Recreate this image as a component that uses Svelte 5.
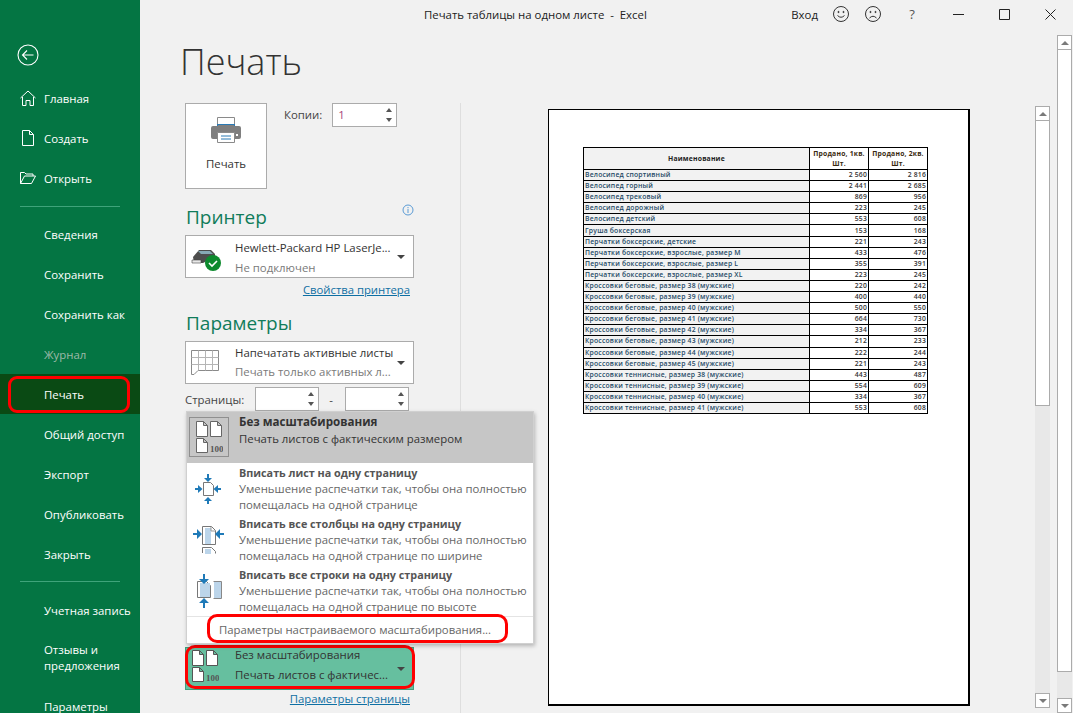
<script>
  const sideTop = [
    { label: 'Главная', icon: 'home' },
    { label: 'Создать', icon: 'new' },
    { label: 'Открыть', icon: 'open' }
  ];
  const sideMid = ['Сведения', 'Сохранить', 'Сохранить как', 'Журнал', 'Печать', 'Общий доступ', 'Экспорт', 'Опубликовать', 'Закрыть'];
  const rows = [
    ['Велосипед спортивный', '2 560', '2 816'],
    ['Велосипед горный', '2 441', '2 685'],
    ['Велосипед трековый', '869', '956'],
    ['Велосипед дорожный', '223', '245'],
    ['Велосипед детский', '553', '608'],
    ['Груша боксерская', '153', '168'],
    ['Перчатки боксерские, детские', '221', '243'],
    ['Перчатки боксерские, взрослые, размер M', '433', '476'],
    ['Перчатки боксерские, взрослые, размер L', '355', '391'],
    ['Перчатки боксерские, взрослые, размер XL', '223', '245'],
    ['Кроссовки беговые, размер 38 (мужские)', '220', '242'],
    ['Кроссовки беговые, размер 39 (мужские)', '400', '440'],
    ['Кроссовки беговые, размер 40 (мужские)', '500', '550'],
    ['Кроссовки беговые, размер 41 (мужские)', '664', '730'],
    ['Кроссовки беговые, размер 42 (мужские)', '334', '367'],
    ['Кроссовки беговые, размер 43 (мужские)', '212', '233'],
    ['Кроссовки беговые, размер 44 (мужские)', '222', '244'],
    ['Кроссовки беговые, размер 45 (мужские)', '221', '243'],
    ['Кроссовки теннисные, размер 38 (мужские)', '443', '487'],
    ['Кроссовки теннисные, размер 39 (мужские)', '554', '609'],
    ['Кроссовки теннисные, размер 40 (мужские)', '334', '367'],
    ['Кроссовки теннисные, размер 41 (мужские)', '553', '608']
  ];
  const scaling = [
    { title: 'Вписать лист на одну страницу', l1: 'Уменьшение распечатки так, чтобы она полностью', l2: 'помещалась на одной странице', icon: 'sheet' },
    { title: 'Вписать все столбцы на одну страницу', l1: 'Уменьшение распечатки так, чтобы она полностью', l2: 'помещалась на одной странице по ширине', icon: 'cols' },
    { title: 'Вписать все строки на одну страницу', l1: 'Уменьшение распечатки так, чтобы она полностью', l2: 'помещалась на одной странице по высоте', icon: 'rows' }
  ];
</script>

{#snippet pages(stroke)}
  <svg class="pages" width="27" height="34" viewBox="0 0 27 34">
    <g fill="#fff" stroke={stroke}>
      <path d="M.5 1.500h7l4 4v11H.5zM7.500 1.500v4h4" />
      <path d="M14.500 1.500h7l4 4v11h-11zM21.500 1.500v4h4" />
      <path d="M.5 18.500h7l4 4v10H.5zM7.500 18.500v4h4" />
    </g>
    <text x="14" y="32" class="hundred">100</text>
  </svg>
{/snippet}

{#snippet spin()}
  <span class="spin">
    <i class="up"></i>
    <i class="down"></i>
  </span>
{/snippet}

<div class="window">
  <aside class="side">
    <div class="back">
      <svg width="22" height="22" viewBox="0 0 22 22" fill="none" stroke="#fff" stroke-width="1.1">
        <circle cx="11" cy="11" r="10" />
        <path d="M5.500 11h11M10 6.500 5.500 11l4.500 4.500" />
      </svg>
    </div>
    {#each sideTop as item}
      <div class="side-item">
        <span class="side-icon">
          {#if item.icon === 'home'}
            <svg width="16" height="16" viewBox="0 0 16 16" fill="none" stroke="#fff" stroke-width="1"><path d="M.5 8 8 1l7.500 7M2.500 7v8.500H6V10.500h4v5h3.500V7" /></svg>
          {:else if item.icon === 'new'}
            <svg width="16" height="16" viewBox="0 0 16 16" fill="none" stroke="#fff" stroke-width="1"><path d="M2.500.5h7l4 4v11h-11zM9.500.5v4h4" /></svg>
          {:else}
            <svg width="16" height="16" viewBox="0 0 16 16" fill="none" stroke="#fff" stroke-width="1"><path d="M.5 13.500V2.500h4l1.500 1.500h7v2M.5 13.500h11l4-7.500H4.500z" /></svg>
          {/if}
        </span>
        {item.label}
      </div>
    {/each}
    <div class="side-sep first"></div>
    {#each sideMid as label}
      <div class="side-item" class:off={label === 'Журнал'} class:on={label === 'Печать'}>
        <span class="side-icon"></span>{label}
        {#if label === 'Печать'}<span class="mark mark-side"></span>{/if}
      </div>
    {/each}
    <div class="side-sep second"></div>
    <div class="side-item"><span class="side-icon"></span>Учетная запись</div>
    <div class="side-item two"><span class="side-icon"></span><span>Отзывы и<br />предложения</span></div>
    <div class="side-item"><span class="side-icon"></span>Параметры</div>
  </aside>

  <main class="main">
    <header class="titlebar">
      <div class="doc-title">Печать таблицы на одном листе&nbsp; -&nbsp; Excel</div>
      <div class="win-tools">
        <span class="login">Вход</span>
        <svg class="tool" width="18" height="18" viewBox="0 0 18 18" fill="none" stroke="#333"><circle cx="9" cy="9" r="7.500" /><circle cx="6.500" cy="7" r=".6" fill="#333" /><circle cx="11.500" cy="7" r=".6" fill="#333" /><path d="M5.500 10.500q3.500 3.500 7 0" /></svg>
        <svg class="tool" width="18" height="18" viewBox="0 0 18 18" fill="none" stroke="#333"><circle cx="9" cy="9" r="7.500" /><circle cx="6.500" cy="7" r=".6" fill="#333" /><circle cx="11.500" cy="7" r=".6" fill="#333" /><path d="M5.500 13q3.500-3.500 7 0" /></svg>
        <span class="help">?</span>
        <span class="ctl"><svg width="11" height="11" viewBox="0 0 11 11" stroke="#222"><path d="M0 5.500h11" /></svg></span>
        <span class="ctl"><svg width="11" height="11" viewBox="0 0 11 11" fill="none" stroke="#222"><path d="M.5.500h10v10H.5z" /></svg></span>
        <span class="ctl"><svg width="11" height="11" viewBox="0 0 11 11" fill="none" stroke="#222"><path d="M.5.500l10 10M10.500.500l-10 10" /></svg></span>
      </div>
    </header>

    <div class="content">
      <div class="col-left">
        <h1>Печать</h1>

        <div class="print-row">
          <div class="print-btn">
            <svg width="30" height="26" viewBox="0 0 30 26">
              <path d="M6.500.5h17v10h-17z" fill="#fff" stroke="#8a8a8a" />
              <path d="M6 7h18v4H6z" fill="#2a7ab5" />
              <path d="M2 9h5v-1h16v1h5a2 2 0 0 1 2 2v9a2 2 0 0 1-2 2H2a2 2 0 0 1-2-2v-9a2 2 0 0 1 2-2z" fill="#7f7f7f" />
              <path d="M6.500 15.500h17v10h-17z" fill="#fff" stroke="#8a8a8a" />
              <path d="M10 19h10M10 22h10" stroke="#2a7ab5" />
              <path d="M25 17h2v2h-2z" fill="#fff" />
            </svg>
            <span>Печать</span>
          </div>
          <div class="copies">
            <span>Копии:</span>
            <div class="num copies-num"><b>1</b>{@render spin()}</div>
          </div>
        </div>

        <div class="head-row">
          <h2>Принтер</h2>
          <svg class="info" width="12" height="12" viewBox="0 0 12 12" fill="none" stroke="#5a9bd5"><circle cx="6" cy="6" r="5" /><path d="M6 5v4M6 3v1.200" /></svg>
        </div>
        <div class="drop">
          <span class="drop-icon">
            <svg width="32" height="28" viewBox="0 0 32 28">
              <g transform="translate(0 4)">
                <path d="M2 10 8 3h12l4 4v3l-12 6H3z" fill="#4d4d4d" />
                <path d="M7 4h12l3 3H10z" fill="#86a9b5" />
                <path d="M1 13h9v3H1z" fill="#e8e8e8" stroke="#444" stroke-width=".6" />
              </g>
              <circle cx="22" cy="20" r="8" fill="#0d8a2e" />
              <path d="M18 20l3 3 5-5" fill="none" stroke="#fff" stroke-width="1.600" />
            </svg>
          </span>
          <span class="drop-text"><span class="t1">Hewlett-Packard HP LaserJe...</span><span class="t2">Не подключен</span></span>
          <i class="caret"></i>
        </div>
        <div class="link-row"><span class="link">Свойства принтера</span></div>

        <h2 class="params">Параметры</h2>
        <div class="drop sheets">
          <span class="drop-icon">
            <svg width="30" height="28" viewBox="0 0 30 28" fill="none" stroke="#8a8a8a">
              <path d="M.5 1.500h27v20H7l-4 4H.5z" />
              <path d="M.5 8.500h27M.5 15.500h27M7.500 1.500v20M14.500 1.500v20M21.500 1.500v20" stroke="#b5b5b5" />
            </svg>
          </span>
          <span class="drop-text"><span class="t1">Напечатать активные листы</span><span class="t2">Печать только активных л...</span></span>
          <i class="caret"></i>
        </div>
        <div class="pages-row">
          <span>Страницы:</span>
          <div class="num pg">{@render spin()}</div>
          <span class="dash">-</span>
          <div class="num pg">{@render spin()}</div>
        </div>

        <div class="spacer"></div>

        <div class="drop green">
          <span class="drop-icon tight">{@render pages('#555')}</span>
          <span class="drop-text"><span class="t1">Без масштабирования</span><span class="t2">Печать листов с фактичес...</span></span>
          <i class="caret"></i>
          <span class="mark mark-green"></span>
        </div>
        <div class="link-row last"><span class="link">Параметры страницы</span></div>
      </div>

      <div class="col-right">
        <div class="page">
          <table>
            <thead>
              <tr>
                <th class="name-h">Наименование</th>
                <th class="q">Продано, 1кв.<br />Шт.</th>
                <th class="q">Продано, 2кв.<br />Шт.</th>
              </tr>
            </thead>
            <tbody>
              {#each rows as r}
                <tr><td class="name">{r[0]}</td><td class="v">{r[1]}</td><td class="v">{r[2]}</td></tr>
              {/each}
            </tbody>
          </table>
        </div>
        <div class="scroll inner">
          <span class="sb-btn"><i class="up"></i></span>
          <span class="thumb"></span>
          <span class="track"></span>
          <span class="sb-btn"><i class="down"></i></span>
        </div>
      </div>

      <div class="scroll outer">
        <span class="sb-btn"><i class="up"></i></span>
        <span class="thumb"></span>
        <span class="track"></span>
        <span class="sb-btn"><i class="down"></i></span>
      </div>
    </div>
  </main>

  <div class="menu">
    <div class="menu-item selected">
      <span class="menu-icon boxed">{@render pages('#666')}</span>
      <span class="menu-text">
        <b>Без масштабирования</b>
        <span>Печать листов с фактическим размером</span>
      </span>
    </div>
    {#each scaling as s}
      <div class="menu-item">
        <span class="menu-icon">
          {#if s.icon === 'sheet'}
            <svg width="38" height="36" viewBox="0 0 38 36">
              <path d="M14.500 11.500h7l3 3v10h-10z" fill="#fff" stroke="#777" />
              <path d="M6 18h4M19 3v5M32 18h-4M19 33v-4" stroke="#1f7ab8" stroke-width="2" />
              <path d="M9 14l4.500 4L9 22zM29 14l-4.500 4 4.500 4zM15 7l4 4 4-4zM15 30l4-4 4 4z" fill="#1f7ab8" />
            </svg>
          {:else if s.icon === 'cols'}
            <svg width="38" height="36" viewBox="0 0 38 36">
              <path d="M13.500 4.500h9l4 4v14h-13z" fill="#fff" stroke="#777" />
              <path d="M16 6h6v16h-6z" fill="#bcd5ea" />
              <path d="M22 5v4h4" fill="#fff" stroke="#999" />
              <path d="M13.500 31v-5.500h9l4 4v2" fill="#fff" stroke="#777" />
              <path d="M16 27h6v5h-6z" fill="#bcd5ea" />
              <path d="M4 12h5M35 12h-5" stroke="#1f7ab8" stroke-width="2" />
              <path d="M8 7l5 5-5 5zM31 7l-5 5 5 5z" fill="#1f7ab8" />
            </svg>
          {:else}
            <svg width="38" height="36" viewBox="0 0 38 36">
              <path d="M8.500 8.500h9l4 4v12h-13z" fill="#fff" stroke="#777" />
              <path d="M11 10h10v14H11z" fill="#bcd5ea" />
              <path d="M24.500 8.500h8v17h-8" fill="#fff" stroke="#888" />
              <path d="M25 9h7v16h-7z" fill="#bcd5ea" />
              <path d="M15 1v6M15 35v-6" stroke="#1f7ab8" stroke-width="2" />
              <path d="M10 6l5 5 5-5zM10 30l5-5 5 5z" fill="#1f7ab8" />
            </svg>
          {/if}
        </span>
        <span class="menu-text">
          <b>{s.title}</b>
          <span>{s.l1}</span>
          <span>{s.l2}</span>
        </span>
      </div>
    {/each}
    <div class="menu-foot">Параметры настраиваемого масштабирования...<span class="mark mark-foot"></span></div>
  </div>
</div>

<style>
  :global(body) { margin: 0; background: #f1f1f1; }
  .window {
    position: relative;
    display: flex;
    width: 1073px;
    height: 713px;
    overflow: hidden;
    font-family: "Open Sans", "Noto Sans", sans-serif;
    font-size: 11.400px;
    color: #444;
  }
  .side {
    flex: 0 0 140px;
    background: #047543;
    color: #fff;
    display: flex;
    flex-direction: column;
    padding-top: 44px;
    box-sizing: border-box;
  }
  .back { flex: 0 0 34px; padding-left: 17px; }
  .side-item {
    position: relative;
    flex: 0 0 40px;
    display: flex;
    align-items: center;
    color: #fff;
  }
  .side-item.two { flex: 0 0 56px; line-height: 16px; }
  .side-item.off { color: #9db9a8; }
  .side-item.on { background: #0a4a14; }
  .side-icon { flex: 0 0 44px; display: flex; justify-content: flex-start; padding-left: 20px; box-sizing: border-box; }
  .side-sep { flex: 0 0 1px; margin: 7px 20px; background: #3fa37a; }
  .side-sep.first { margin-top: 8px; }
  .side-sep.second { margin-bottom: 8px; }

  .mark { position: absolute; border: 3px solid #f00; box-sizing: border-box; pointer-events: none; }
  .mark-side { left: 8px; top: 2px; width: 122px; height: 37px; border-radius: 9px; }
  .mark-green { left: -1px; top: -3px; width: 230px; height: 44px; border-radius: 10px; }
  .mark-foot { left: 20px; top: -3px; width: 301px; height: 29px; border-radius: 10px; }

  .main { flex: 1; display: flex; flex-direction: column; min-width: 0; }
  .titlebar { position: relative; flex: 0 0 30px; display: flex; justify-content: flex-end; align-items: flex-start; }
  .doc-title {
    position: absolute;
    left: 284px;
    top: 7px;
    color: #222;
    white-space: nowrap;
  }
  .win-tools { display: flex; align-items: center; color: #222; height: 28px; }
  .login { margin-right: 14px; }
  .tool { margin-right: 14px; }
  .help { width: 20px; margin: 0 13px 0 6px; color: #555; font-size: 13px; text-align: center; }
  .ctl { width: 46px; display: flex; justify-content: center; }

  .content { position: relative; flex: 1; display: flex; min-height: 0; }
  .col-left {
    position: relative;
    flex: 0 0 320px;
    box-sizing: border-box;
    padding: 0 46px 0 45px;
    display: flex;
    flex-direction: column;
  }
  .col-left::after {
    content: "";
    position: absolute;
    right: -1px;
    top: 73px;
    bottom: 0;
    width: 1px;
    background: #dedede;
  }
  h1 {
    margin: 7px 0 0 -5px;
    height: 66px;
    flex: 0 0 auto;
    font-weight: 300;
    font-size: 36px;
    line-height: 50px;
    color: #333;
  }
  .print-row { display: flex; flex: 0 0 86px; }
  .print-btn {
    width: 82px;
    height: 86px;
    box-sizing: border-box;
    background: #fff;
    border: 1px solid #ababab;
    display: flex;
    flex-direction: column;
    align-items: center;
    padding-top: 13px;
    gap: 13px;
    color: #333;
  }
  .copies { display: flex; margin-left: 17px; gap: 10px; align-items: flex-start; color: #444; }
  .copies > span { line-height: 24px; }
  .num {
    position: relative;
    box-sizing: border-box;
    height: 24px;
    background: #fff;
    border: 1px solid #ababab;
  }
  .copies-num { width: 65px; padding: 0 5px; line-height: 22px; }
  .copies-num b { font-weight: 400; color: #a8457a; }
  .spin {
    position: absolute;
    right: 4px;
    top: 4px;
    bottom: 4px;
    display: flex;
    flex-direction: column;
    justify-content: space-between;
  }
  .up, .down { display: block; width: 0; height: 0; border-left: 3.500px solid transparent; border-right: 3.500px solid transparent; }
  .up { border-bottom: 4px solid #555; }
  .down { border-top: 4px solid #555; }

  .head-row { display: flex; justify-content: space-between; align-items: flex-start; margin-top: 13px; flex: 0 0 33px; }
  h2 {
    margin: -1px 0 0;
    font-weight: 400;
    font-size: 19px;
    line-height: 32px;
    color: #107c5a;
    padding-left: 1px;
  }
  .info { margin-top: 2px; }
  h2.params { margin-top: 4px; flex: 0 0 34px; box-sizing: border-box; }
  .drop {
    position: relative;
    box-sizing: border-box;
    height: 43px;
    width: 229px;
    background: #fff;
    border: 1px solid #ababab;
    display: flex;
    align-items: center;
    flex: 0 0 auto;
  }
  .drop-icon { flex: 0 0 49px; padding-left: 5px; box-sizing: border-box; display: flex; }
  .drop-icon.tight { padding-left: 6px; align-self: flex-start; padding-top: 1px; }
  .drop-text { flex: 1; display: flex; flex-direction: column; line-height: 20px; white-space: nowrap; overflow: hidden; padding-top: 2px; }
  .t1 { color: #333; }
  .t2 { color: #7a7a7a; }
  .sheets .drop-text { padding-top: 0; margin-top: -1px; line-height: 19px; }
  .caret {
    position: absolute;
    right: 8px;
    top: 19px;
    width: 0; height: 0;
    border-left: 4px solid transparent; border-right: 4px solid transparent; border-top: 4px solid #444;
  }
  .link-row { display: flex; justify-content: flex-end; width: 225px; flex: 0 0 25px; line-height: 24px; }
  .link { color: #0e6fa3; text-decoration: underline; font-size: 11.300px; }
  .pages-row { display: flex; align-items: center; flex: 0 0 24px; margin-top: 3px; }
  .pg { width: 64px; margin-left: 11px; }
  .dash { margin-left: 10px; width: 6px; }
  .dash + .pg { margin-left: 10px; }
  .spacer { flex: 0 0 236px; }
  .green { background: #66bf9f; border-color: #3f9f7c; }
  .green .t1, .green .t2 { color: #333; }
  .green .drop-text { padding-top: 0; margin-top: -8px; }
  .link-row.last { flex: 0 0 22px; line-height: 17px; }
  .pages { display: block; }
  .hundred { font-family: "Liberation Serif", serif; font-size: 9px; font-weight: 700; fill: #555; }

  .col-right { position: relative; flex: 1; padding: 79px 0 0 88px; box-sizing: border-box; display: flex; }
  .page {
    width: 422px;
    height: 597px;
    box-sizing: border-box;
    background: #fff;
    border: 1px solid #000;
    border-right-width: 2px;
    border-bottom-width: 2px;
    padding: 37px 0 0 34px;
  }
  table {
    width: 345px;
    border-collapse: collapse;
    table-layout: fixed;
    font-family: "Open Sans", sans-serif;
    font-size: 6.800px;
    font-weight: 600;
    letter-spacing: .2px;
    color: #1f4a66;
  }
  th, td { box-sizing: border-box; border: 1px solid #000; padding: 0 1px; height: 11.100px; line-height: 8px; white-space: nowrap; overflow: hidden; }
  th { background: #fff; color: #222; font-weight: 700; height: 22px; line-height: 10px; }
  th.name-h { background: #f2f2f2; width: 226px; }
  th.q { width: 59px; padding: 0; color: #3a2a10; }
  td.name { background: #f2f2f2; }
  td.v { text-align: right; color: #333; }

  .scroll { position: absolute; width: 15px; display: flex; flex-direction: column; background: #e8e8e8; }
  .inner { left: 575px; top: 76px; bottom: 5px; }
  .outer { left: 917px; top: 5px; bottom: 0; }
  .sb-btn {
    flex: 0 0 15px;
    box-sizing: border-box;
    background: #fff;
    border: 1px solid #ababab;
    display: flex;
    align-items: center;
    justify-content: center;
  }
  .sb-btn .up, .sb-btn .down { border-left-width: 4px; border-right-width: 4px; }
  .sb-btn .up { border-bottom-color: #7a7a7a; }
  .sb-btn .down { border-top-color: #7a7a7a; }
  .thumb { background: #fff; border: 1px solid #ababab; border-top: 0; box-sizing: border-box; }
  .inner .thumb { flex: 0 0 285px; }
  .outer .thumb { flex: 0 0 622px; }
  .track { flex: 1; }

  .menu {
    position: absolute;
    left: 186px;
    top: 411px;
    width: 348px;
    height: 233px;
    box-sizing: border-box;
    background: #fff;
    border: 1px solid #d0d0d0;
    box-shadow: 1px 2px 4px rgba(0,0,0,.25);
    display: flex;
    flex-direction: column;
  }
  .menu-item { display: flex; flex: 0 0 51px; }
  .menu-item.selected { background: #c6c6c6; }
  .menu-icon { flex: 0 0 52px; padding-left: 2px; box-sizing: border-box; display: flex; align-items: center; }
  .menu-icon.boxed {
    flex: 0 0 40px;
    height: 40px;
    margin: 5px 10px 0 2px;
    padding: 0;
    border: 1px solid #8f8f8f;
    justify-content: center;
  }
  .menu-text { display: flex; flex-direction: column; line-height: 16px; color: #666; white-space: nowrap; padding-top: 2px; font-size: 11.350px; }
  .menu-text b { color: #555; font-weight: 700; font-size: 10.800px; }
  .selected .menu-text { line-height: 16.500px; }
  .selected .menu-text b { font-size: 11.600px; }
  .selected .menu-text b, .selected .menu-text span { color: #333; }
  .menu-foot {
    position: relative;
    margin-top: auto;
    height: 27px;
    line-height: 26px;
    padding-left: 32px;
    border-top: 1px solid #e4e4e4;
    color: #666;
    font-size: 11.350px;
    box-sizing: border-box;
  }
</style>
